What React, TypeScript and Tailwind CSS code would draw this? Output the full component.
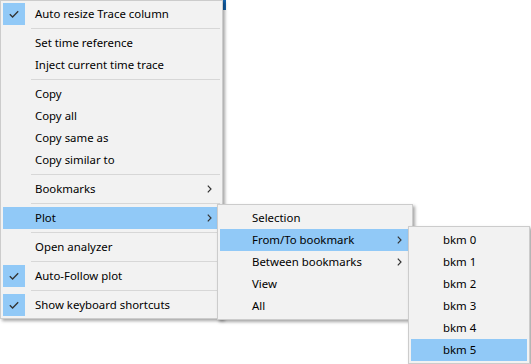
import React from 'react';

type Entry =
  | { kind: 'sep' }
  | { kind: 'item'; label: string; checked?: boolean; sub?: boolean; active?: boolean };

const mainMenu: Entry[] = [
  { kind: 'item', label: 'Auto resize Trace column', checked: true },
  { kind: 'sep' },
  { kind: 'item', label: 'Set time reference' },
  { kind: 'item', label: 'Inject current time trace' },
  { kind: 'sep' },
  { kind: 'item', label: 'Copy' },
  { kind: 'item', label: 'Copy all' },
  { kind: 'item', label: 'Copy same as' },
  { kind: 'item', label: 'Copy similar to' },
  { kind: 'sep' },
  { kind: 'item', label: 'Bookmarks', sub: true },
  { kind: 'sep' },
  { kind: 'item', label: 'Plot', sub: true, active: true },
  { kind: 'sep' },
  { kind: 'item', label: 'Open analyzer' },
  { kind: 'sep' },
  { kind: 'item', label: 'Auto-Follow plot', checked: true },
  { kind: 'sep' },
  { kind: 'item', label: 'Show keyboard shortcuts', checked: true },
];

const plotMenu: Entry[] = [
  { kind: 'item', label: 'Selection' },
  { kind: 'item', label: 'From/To bookmark', sub: true, active: true },
  { kind: 'item', label: 'Between bookmarks', sub: true },
  { kind: 'item', label: 'View' },
  { kind: 'item', label: 'All' },
];

const bkmMenu: Entry[] = [0, 1, 2, 3, 4, 5].map((n) => ({
  kind: 'item' as const,
  label: `bkm ${n}`,
  active: n === 5,
}));

function Check() {
  return (
    <svg width="10" height="8" viewBox="0 0 10 8" className="block">
      <path d="M0.8 4.2 L3.6 7 L9.2 1.2" fill="none" stroke="#333" strokeWidth="1.3" />
    </svg>
  );
}

function Chevron() {
  return (
    <svg width="5" height="8" viewBox="0 0 5 8" className="block">
      <path d="M0.8 0.6 L4 4 L0.8 7.4" fill="none" stroke="#333" strokeWidth="1.2" />
    </svg>
  );
}

function MenuBody({ entries }: { entries: Entry[] }) {
  return (
    <div className="flex flex-col p-[2px]">
      {entries.map((e, i) =>
        e.kind === 'sep' ? (
          <div key={i} className="flex h-[7px] items-center pl-[28px]">
            <div className="h-px w-full bg-[#d7d7d7]" />
          </div>
        ) : (
          <div
            key={i}
            className={`relative flex h-[22px] items-center pl-[32px] pr-[20px] ${
              e.active ? 'bg-[#91c9f7]' : ''
            }`}
          >
            {e.checked && (
              <div className="absolute left-0 top-0 flex h-[22px] w-[22px] items-center justify-center bg-[#91c9f7]">
                <Check />
              </div>
            )}
            <span className="whitespace-nowrap">{e.label}</span>
            {e.sub && (
              <div className="absolute right-[8px] top-[7px]">
                <Chevron />
              </div>
            )}
          </div>
        ),
      )}
    </div>
  );
}

export default function App() {
  return (
    <div
      className="relative h-[364px] w-[531px] overflow-hidden bg-white text-[11.4px] text-black"
      style={{ fontFamily: '"Noto Sans", "Open Sans", sans-serif' }}
    >
      <div className="absolute left-[223px] top-0 h-[10px] w-[3px] bg-[#1565b0]" />

      <div className="absolute left-0 top-0 w-[223px] border border-[#cccccc] bg-[#f2f2f2] shadow-[2px_2px_3px_rgba(0,0,0,0.35)]">
        <MenuBody entries={mainMenu} />
      </div>

      <div className="absolute left-[217px] top-[204px] w-[196px] border border-[#cccccc] bg-[#f2f2f2] shadow-[2px_2px_3px_rgba(0,0,0,0.35)]">
        <MenuBody entries={plotMenu} />
      </div>

      <div className="absolute left-[408px] top-[226px] w-[122px] border border-[#cccccc] bg-[#f2f2f2] shadow-[2px_2px_3px_rgba(0,0,0,0.35)]">
        <MenuBody entries={bkmMenu} />
      </div>
    </div>
  );
}
